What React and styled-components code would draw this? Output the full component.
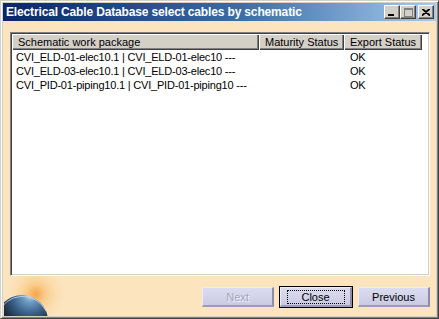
import React from "react";
import styled, { createGlobalStyle } from "styled-components";

const Global = createGlobalStyle`
  html, body { margin: 0; padding: 0; background: #d4d0c8; }
  body { font-family: Tahoma, "DejaVu Sans", "Liberation Sans", sans-serif; }
`;

const Window = styled.div`
  box-sizing: border-box;
  width: 439px;
  height: 319px;
  display: flex;
  flex-direction: column;
  background: #d4d0c8;
  border: 1px solid;
  border-color: #d4d0c8 #404040 #404040 #d4d0c8;
  box-shadow: inset 1px 1px #ffffff, inset -1px -1px #808080;
  padding: 2px;
  overflow: hidden;
`;

const TitleBar = styled.div`
  height: 18px;
  flex: none;
  display: flex;
  align-items: center;
  padding: 0 2px 0 2px;
  background: linear-gradient(to right, #0a246a 0%, #3a6ea5 55%, #a6caf0 100%);
`;

const Title = styled.div`
  flex: 1;
  color: #ffffff;
  font-family: "Liberation Sans", Arial, sans-serif;
  font-weight: bold;
  font-size: 12px;
  letter-spacing: -0.15px;
  white-space: nowrap;
  padding-left: 1px;
`;

const Controls = styled.div`
  display: flex;
  align-items: center;
`;

const CtlBtn = styled.div`
  box-sizing: border-box;
  width: 16px;
  height: 14px;
  margin-left: ${(p) => (p.$gap ? "2px" : "0")};
  background: #d4d0c8;
  border: 1px solid;
  border-color: #ffffff #404040 #404040 #ffffff;
  box-shadow: inset -1px -1px #808080;
  display: flex;
  align-items: center;
  justify-content: center;
`;

const Body = styled.div`
  flex: 1;
  display: flex;
  flex-direction: column;
  background: #fce4be;
  padding-top: 11px;
  min-height: 0;
`;

const ListBox = styled.div`
  box-sizing: border-box;
  margin: 0 6px 0 7px;
  height: 245px;
  background: #ffffff;
  border: 1px solid;
  border-color: #808080 #ffffff #ffffff #808080;
  box-shadow: inset 1px 1px #404040, inset -1px -1px #d4d0c8;
  padding: 1px;
  font-family: "Liberation Sans", Arial, sans-serif;
  font-size: 11px;
  color: #000;
`;

const Grid = styled.div`
  display: grid;
  grid-template-columns: 247px 85px 78px;
`;

const HeadCell = styled.div`
  box-sizing: border-box;
  height: 16px;
  line-height: 16px;
  padding-left: 6px;
  background: #d4d0c8;
  box-shadow: inset 1px 1px #ffffff, inset -1px -1px #404040, inset -2px -2px #808080;
  white-space: nowrap;
`;

const Cell = styled.div`
  height: 14px;
  line-height: 14px;
  padding-left: ${(p) => p.$pad || 4}px;
  letter-spacing: -0.2px;
  white-space: nowrap;
`;

const Footer = styled.div`
  flex: 1;
  display: flex;
  align-items: flex-end;
  justify-content: space-between;
  padding-left: 1px;
`;

const Buttons = styled.div`
  display: flex;
  gap: 6px;
  padding: 0 6px 9px 0;
`;

const Btn = styled.div`
  box-sizing: border-box;
  width: 72px;
  height: 20px;
  display: flex;
  align-items: center;
  justify-content: center;
  font-family: "Liberation Sans", Arial, sans-serif;
  font-size: 11px;
  color: ${(p) => (p.$disabled ? "#a4a4bc" : "#000")};
  text-shadow: ${(p) => (p.$disabled ? "1px 1px #f4f4fa" : "none")};
  background: linear-gradient(to bottom, #dcdcf0, #cacae4);
  border-top: 1px solid #ececf6;
  border-left: 1px solid #ececf6;
  border-right: 2px solid #8c8ca8;
  border-bottom: 2px solid #9c9cb8;
  outline: ${(p) => (p.$focus ? "1px solid #000" : "none")};
`;

const Focus = styled.span`
  border: 1px dotted #000;
  width: 58px;
  text-align: center;
  box-sizing: border-box;
  height: 14px;
  line-height: 12px;
`;

const rows = [
  ["CVI_ELD-01-elec10.1 | CVI_ELD-01-elec10 ---", "", "OK"],
  ["CVI_ELD-03-elec10.1 | CVI_ELD-03-elec10 ---", "", "OK"],
  ["CVI_PID-01-piping10.1 | CVI_PID-01-piping10 ---", "", "OK"],
];

const Earth = () => (
  <svg width="64" height="40" viewBox="0 0 64 40">
    <defs>
      <radialGradient id="glow" cx="32" cy="18" r="32" gradientUnits="userSpaceOnUse">
        <stop offset="0" stopColor="#f49a38" stopOpacity="0.9" />
        <stop offset="0.3" stopColor="#f8bc68" stopOpacity="0.6" />
        <stop offset="1" stopColor="#fce4be" stopOpacity="0" />
      </radialGradient>
      <radialGradient id="sph" cx="26" cy="20" r="32" gradientUnits="userSpaceOnUse">
        <stop offset="0" stopColor="#b4d2ea" />
        <stop offset="0.2" stopColor="#6e9cc4" />
        <stop offset="0.55" stopColor="#3a6088" />
        <stop offset="1" stopColor="#16222e" />
      </radialGradient>
    </defs>
    <rect x="0" y="0" width="64" height="40" fill="url(#glow)" />
    <circle cx="18" cy="45" r="26" fill="url(#sph)" />
    <path d="M-6 38 A26 26 0 0 1 42 35" fill="none" stroke="#d4e4f0" strokeWidth="1" opacity="0.7" />
  </svg>
);

export default function App() {
  return (
    <>
      <Global />
      <Window>
        <TitleBar>
          <Title>Electrical Cable Database select cables by schematic</Title>
          <Controls>
            <CtlBtn>
              <svg width="8" height="7" viewBox="0 0 8 7"><rect x="0" y="5" width="6" height="2" fill="#000" /></svg>
            </CtlBtn>
            <CtlBtn>
              <svg width="9" height="9" viewBox="0 0 9 9"><rect x="0.5" y="0.5" width="8" height="8" fill="none" stroke="#808080" /><rect x="0" y="0" width="9" height="2" fill="#808080" /></svg>
            </CtlBtn>
            <CtlBtn $gap>
              <svg width="8" height="7" viewBox="0 0 8 7"><path d="M0 0 L8 7 M8 0 L0 7 M1 0 L8 6 M7 0 L0 6" stroke="#000" strokeWidth="1.2" /></svg>
            </CtlBtn>
          </Controls>
        </TitleBar>
        <Body>
          <ListBox>
            <Grid>
              <HeadCell>Schematic work package</HeadCell>
              <HeadCell>Maturity Status</HeadCell>
              <HeadCell>Export Status</HeadCell>
              {rows.map((r, i) => (
                <React.Fragment key={i}>
                  <Cell>{r[0]}</Cell>
                  <Cell>{r[1]}</Cell>
                  <Cell $pad={6}>{r[2]}</Cell>
                </React.Fragment>
              ))}
            </Grid>
          </ListBox>
          <Footer>
            <Earth />
            <Buttons>
              <Btn $disabled>Next</Btn>
              <Btn $focus><Focus>Close</Focus></Btn>
              <Btn>Previous</Btn>
            </Buttons>
          </Footer>
        </Body>
      </Window>
    </>
  );
}
